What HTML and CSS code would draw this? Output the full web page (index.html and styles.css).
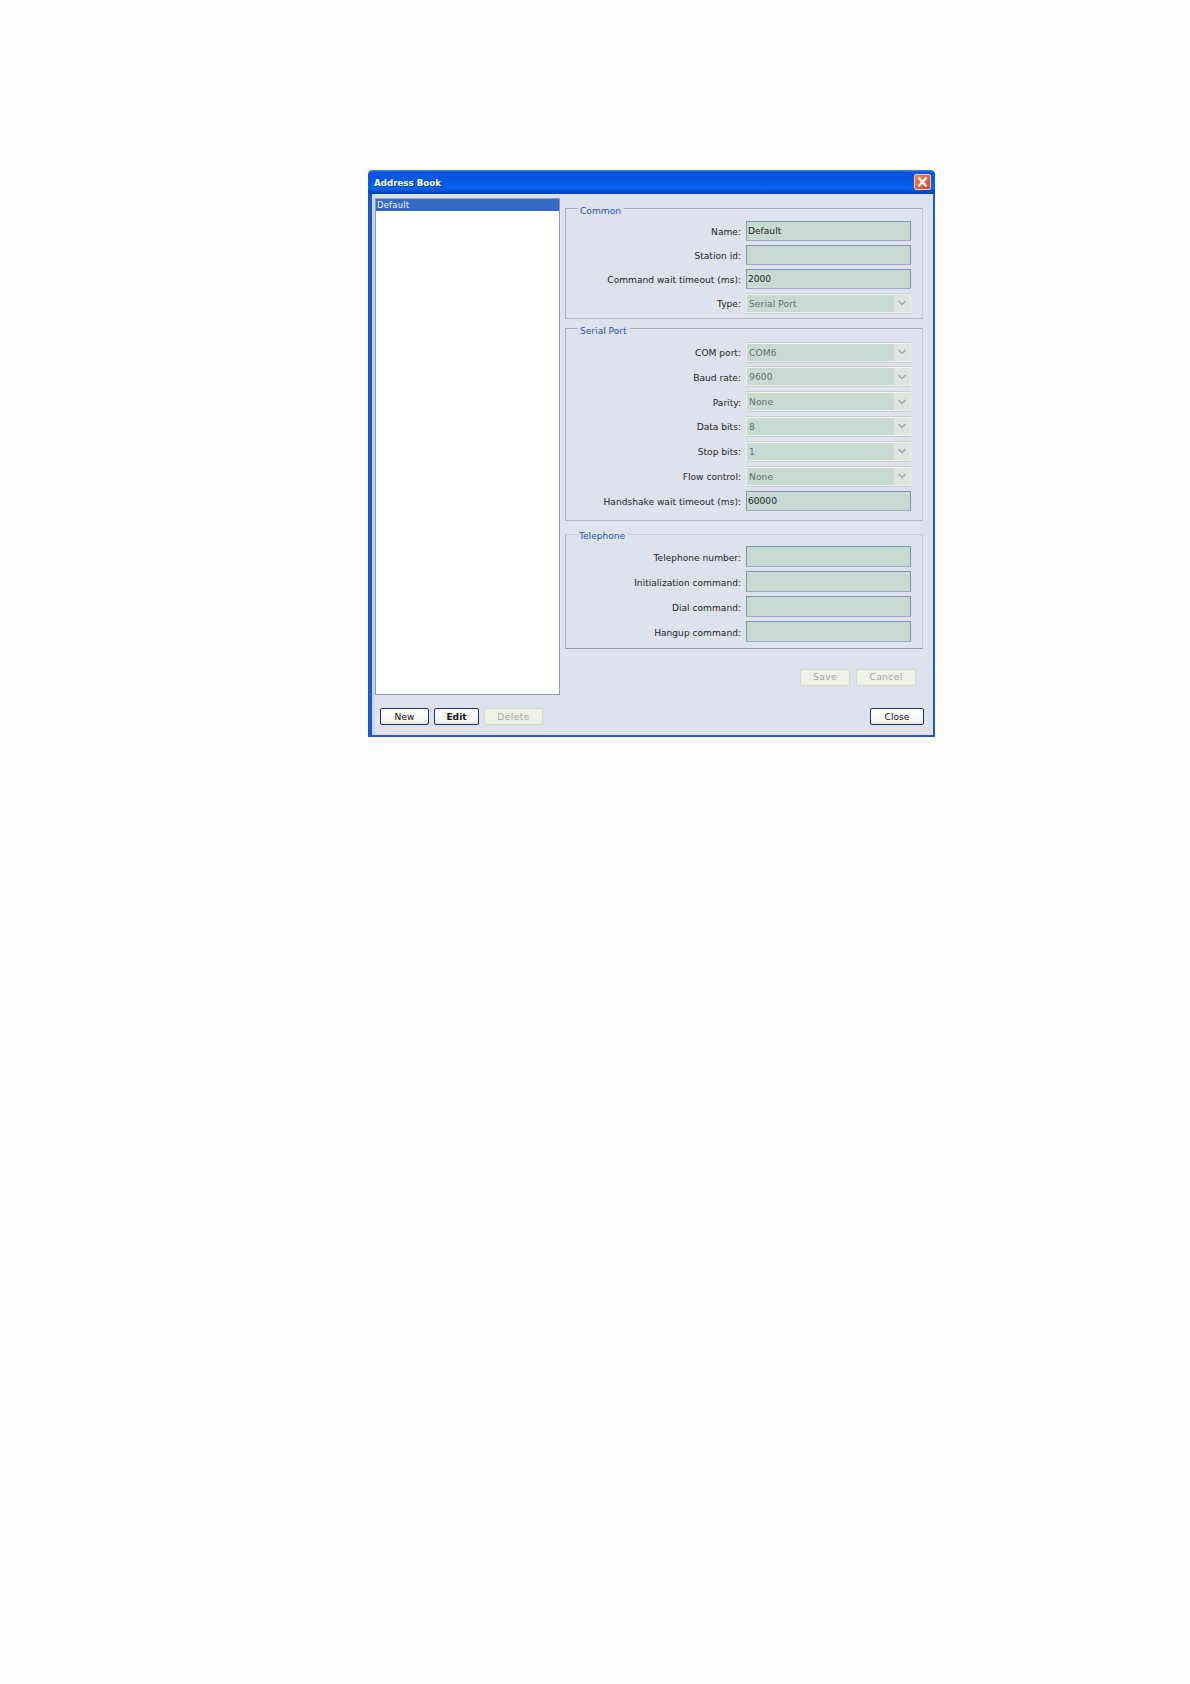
FILE: index.html
```html
<!DOCTYPE html>
<html lang="en">
<head>
<meta charset="utf-8">
<title>Address Book</title>
<link rel="stylesheet" href="styles.css">
</head>
<body>
<div class="window">
  <div class="titlebar">
    <span class="title">Address Book</span>
    <span class="close"><svg viewBox="0 0 17 16" width="17" height="16"><path d="M4.5 3.5 12.5 12.5M12.5 3.5 4.5 12.5" stroke="#fff" stroke-width="2.4" fill="none"/></svg></span>
  </div>
  <div class="client">
    <div class="main">
      <div class="list"><div class="list-item">Default</div></div>
      <div class="form">
        <section class="group group-common">
          <h3 class="legend">Common</h3>
          <div class="rows">
            <div class="row"><label>Name:</label><div class="field">Default</div></div>
            <div class="row"><label>Station id:</label><div class="field"></div></div>
            <div class="row"><label>Command wait timeout (ms):</label><div class="field">2000</div></div>
            <div class="row"><label>Type:</label><div class="select"><span class="value">Serial Port</span><span class="arrow"><svg viewBox="0 0 10 8" width="10" height="8"><path d="M1.500 2 5 5.500 8.500 2" stroke="#a3aaa8" stroke-width="1.500" fill="none"/></svg></span></div></div>
          </div>
        </section>
        <section class="group group-serial">
          <h3 class="legend">Serial Port</h3>
          <div class="rows rows-serial">
            <div class="row"><label>COM port:</label><div class="select"><span class="value">COM6</span><span class="arrow"><svg viewBox="0 0 10 8" width="10" height="8"><path d="M1.500 2 5 5.500 8.500 2" stroke="#a3aaa8" stroke-width="1.500" fill="none"/></svg></span></div></div>
            <div class="row"><label>Baud rate:</label><div class="select"><span class="value">9600</span><span class="arrow"><svg viewBox="0 0 10 8" width="10" height="8"><path d="M1.500 2 5 5.500 8.500 2" stroke="#a3aaa8" stroke-width="1.500" fill="none"/></svg></span></div></div>
            <div class="row"><label>Parity:</label><div class="select"><span class="value">None</span><span class="arrow"><svg viewBox="0 0 10 8" width="10" height="8"><path d="M1.500 2 5 5.500 8.500 2" stroke="#a3aaa8" stroke-width="1.500" fill="none"/></svg></span></div></div>
            <div class="row"><label>Data bits:</label><div class="select"><span class="value">8</span><span class="arrow"><svg viewBox="0 0 10 8" width="10" height="8"><path d="M1.500 2 5 5.500 8.500 2" stroke="#a3aaa8" stroke-width="1.500" fill="none"/></svg></span></div></div>
            <div class="row"><label>Stop bits:</label><div class="select"><span class="value">1</span><span class="arrow"><svg viewBox="0 0 10 8" width="10" height="8"><path d="M1.500 2 5 5.500 8.500 2" stroke="#a3aaa8" stroke-width="1.500" fill="none"/></svg></span></div></div>
            <div class="row"><label>Flow control:</label><div class="select"><span class="value">None</span><span class="arrow"><svg viewBox="0 0 10 8" width="10" height="8"><path d="M1.500 2 5 5.500 8.500 2" stroke="#a3aaa8" stroke-width="1.500" fill="none"/></svg></span></div></div>
            <div class="row"><label>Handshake wait timeout (ms):</label><div class="field">60000</div></div>
          </div>
        </section>
        <section class="group group-phone">
          <h3 class="legend">Telephone</h3>
          <div class="rows rows-phone">
            <div class="row"><label>Telephone number:</label><div class="field"></div></div>
            <div class="row"><label>Initialization command:</label><div class="field"></div></div>
            <div class="row"><label>Dial command:</label><div class="field"></div></div>
            <div class="row"><label>Hangup command:</label><div class="field"></div></div>
          </div>
        </section>
        <div class="form-actions">
          <button class="btn btn-save" disabled>Save</button>
          <button class="btn btn-cancel" disabled>Cancel</button>
        </div>
      </div>
    </div>
    <div class="footer">
      <div class="footer-left">
        <button class="btn btn-new">New</button>
        <button class="btn btn-edit">Edit</button>
        <button class="btn btn-delete" disabled>Delete</button>
      </div>
      <button class="btn btn-close">Close</button>
    </div>
  </div>
</div>
</body>
</html>
```
FILE: styles.css
```css
* { box-sizing: border-box; }
html, body { margin: 0; padding: 0; }
body {
  background: #fefefe;
  height: 1684px;
  padding: 170px 0 0 368px;
  font-family: "DejaVu Sans", sans-serif;
  font-size: 9.1px;
  color: #262626;
}
.window {
  width: 567px;
  height: 567px;
  display: flex;
  flex-direction: column;
  border-radius: 5px 5px 0 0;
  overflow: hidden;
  background: #1c58d6;
}
.titlebar {
  height: 24px;
  flex: none;
  display: flex;
  align-items: center;
  justify-content: space-between;
  padding: 0 4px 0 6px;
  background: linear-gradient(#3a86ec 0, #0c56dc 10%, #0458e4 45%, #0664ee 75%, #0342b4 100%);
}
.title {
  color: #fff;
  font-weight: bold;
  font-size: 8.7px;
  padding-top: 2px;
  text-shadow: 1px 1px 0 #0a3a9c;
}
.close {
  width: 17px;
  height: 16px;
  display: block;
  border: 1px solid #f0c8b8;
  border-radius: 2px;
  background: linear-gradient(135deg, #e88058, #d64a28);
  overflow: hidden;
}
.close svg { display: block; margin: -1px; }
.client {
  flex: 1;
  margin: 0 2px 2px 4px;
  background: linear-gradient(90deg, #cbd8ec 0, #cbd8ec 3px, #dde2ec 3px);
  padding: 4px 10px 0 3px;
  display: flex;
  flex-direction: column;
}
.main { display: flex; gap: 5px; height: 497px; }
.list {
  width: 185px;
  flex: none;
  background: #fff;
  border: 1px solid #8a9db6;
  border-top-color: #9aa6b8;
}
.list-item {
  height: 12px;
  line-height: 12px;
  padding-left: 1px;
  font-size: 8.3px;
  letter-spacing: 0.3px;
  color: #f2f5fb;
  background: #3569c4;
}
.form { flex: 1; padding-top: 10px; display: flex; flex-direction: column; }
.group {
  position: relative;
  border: 1px solid #a4adb8;
  border-right-color: #c4cbd6;
  border-bottom-color: #b0b8c4;
  padding-right: 11px;
}
.group-common { height: 111px; padding-top: 12px; }
.group-serial { height: 193px; padding-top: 13px; margin-top: 9px; }
.group-phone { height: 115px; padding-top: 11px; margin-top: 13px; border-top-color: #c4cbd6; border-bottom-color: #8f9bac; }
.legend {
  position: absolute;
  left: 12px;
  top: -3px;
  margin: 0;
  padding: 0 3px 0 2px;
  line-height: 11px;
  font-size: 9.1px;
  font-weight: normal;
  color: #2555b0;
  background: #dde2ec;
}
.group-phone .legend { left: 11px; top: -4px; }
.rows { display: flex; flex-direction: column; gap: 4px; }
.rows-serial { gap: 4.83px; }
.rows-phone { gap: 4px; }
.row { height: 20px; display: flex; align-items: center; justify-content: flex-end; gap: 5px; }
.rows-phone .row { height: 21px; }
.row label { white-space: nowrap; padding-top: 2px; }
.field {
  width: 165px;
  height: 100%;
  line-height: 19px;
  padding-left: 1px;
  background: #c8dbd3;
  border: 1px solid #7f97ae;
  border-bottom-color: #98abc0;
  color: #1c1c1c;
}
.select {
  width: 165px;
  height: 19px;
  display: flex;
  background: #c8dbd3;
  border: 1px solid #eef0df;
  border-top-color: #f2f3e4;
  box-shadow: 0 -1px 0 #c8ced2, 0 1px 0 #c8ced6;
}
.value {
  flex: 1;
  line-height: 18px;
  padding-left: 2px;
  color: #5d7570;
  letter-spacing: 0.1px;
}
.arrow {
  width: 16px;
  flex: none;
  background: #dfe4e0;
  display: flex;
  align-items: center;
  justify-content: center;
}
.form-actions {
  display: flex;
  justify-content: flex-end;
  gap: 6px;
  margin-top: 20px;
  padding-right: 7px;
}
.btn {
  height: 17px;
  padding: 0;
  font-family: "DejaVu Sans", sans-serif;
  font-size: 9.1px;
  line-height: 15px;
  background: linear-gradient(#ffffff, #f4f4f0 80%, #e4e4dc);
  border: 1px solid #0f3a78;
  border-radius: 2px;
  color: #111;
}
.btn:disabled {
  background: #f0f1e6;
  border-color: #d6d8cc;
  color: #a0a69e;
  letter-spacing: 0.4px;
}
.btn-save { width: 50px; }
.btn-cancel { width: 60px; }
.btn-new { width: 49px; }
.btn-edit { width: 45px; font-weight: bold; }
.btn-delete { width: 59px; }
.btn-close { width: 54px; margin-right: -1px; }
.footer {
  display: flex;
  justify-content: space-between;
  margin-top: 13px;
  padding: 0 0 0 5px;
}
.footer .btn { padding-top: 1px; }
.footer-left { display: flex; gap: 5px; }
```
